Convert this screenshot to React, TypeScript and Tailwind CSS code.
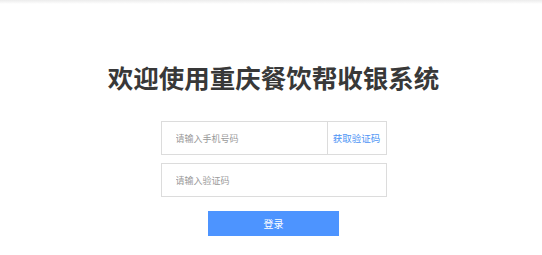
export default function App() {
  return (
    <div
      className="relative h-[255px] w-[542px] overflow-hidden bg-white"
      style={{ fontFamily: '"Noto Sans CJK SC", "Noto Sans", sans-serif' }}
    >
      <div className="h-[4px] w-full bg-gradient-to-b from-[#ececec] to-white" />
      <div className="flex flex-col items-center pl-[5px]">
        <h1 className="mt-[58px] text-[25.5px] font-bold leading-[30px] text-[#383838]">
          欢迎使用重庆餐饮帮收银系统
        </h1>
        <div className="mt-[29px] flex h-[34px] w-[226px] items-center border border-[#dcdcdc]">
          <input
            className="h-full flex-1 bg-transparent pl-[14px] text-[9px] text-[#333] placeholder:text-[#999] outline-none"
            placeholder="请输入手机号码"
          />
          <div className="flex h-full w-[59px] items-center justify-center border-l border-[#dcdcdc] text-[9.5px] text-[#4d94f5]">
            获取验证码
          </div>
        </div>
        <div className="mt-[8px] flex h-[34px] w-[226px] items-center border border-[#dcdcdc]">
          <input
            className="h-full flex-1 bg-transparent pl-[14px] text-[9px] text-[#333] placeholder:text-[#999] outline-none"
            placeholder="请输入验证码"
          />
        </div>
        <button className="mt-[14px] h-[25px] w-[131px] bg-[#4d94ff] text-[10px] text-white">
          登录
        </button>
      </div>
    </div>
  );
}
